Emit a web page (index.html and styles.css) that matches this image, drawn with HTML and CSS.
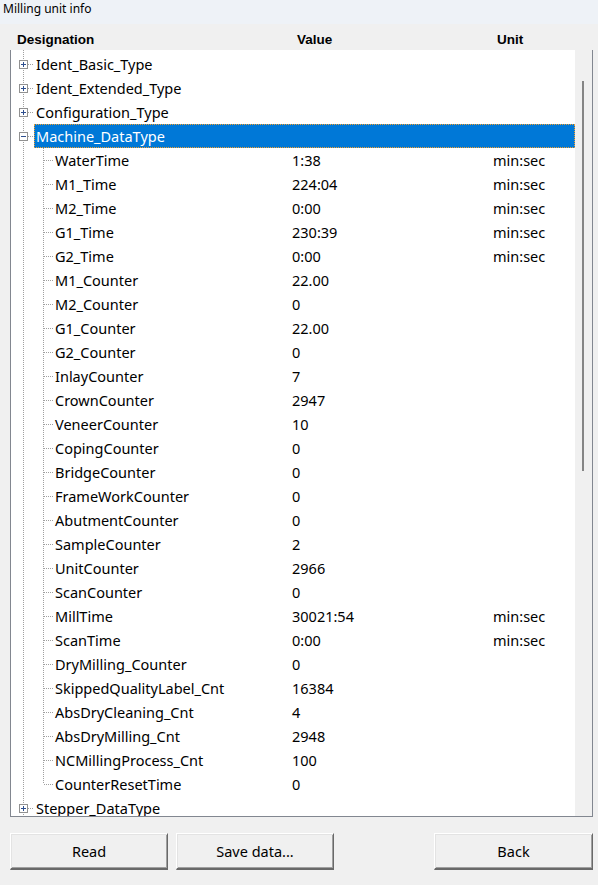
FILE: index.html
```html
<!DOCTYPE html>
<html>
<head>
<meta charset="utf-8">
<link rel="stylesheet" href="styles.css">
</head>
<body>
<div class="title">Milling unit info</div>
<div class="header">
  <span class="h-des">Designation</span>
  <span class="h-val">Value</span>
  <span class="h-unit">Unit</span>
</div>
<div class="panel">
  <div class="tree">
    <div class="row root"><span class="tog"><svg width="9" height="9" viewBox="0 0 9 9"><rect x="0.5" y="0.5" width="8" height="8" fill="#fff" stroke="#919191"/><path d="M2 4.5h5M4.5 2v5" stroke="#2e4f8f"/></svg></span><span class="hconn"></span><span class="label">Ident_Basic_Type</span></div>
    <div class="row root"><span class="tog"><svg width="9" height="9" viewBox="0 0 9 9"><rect x="0.5" y="0.5" width="8" height="8" fill="#fff" stroke="#919191"/><path d="M2 4.5h5M4.5 2v5" stroke="#2e4f8f"/></svg></span><span class="hconn"></span><span class="label">Ident_Extended_Type</span></div>
    <div class="row root"><span class="tog"><svg width="9" height="9" viewBox="0 0 9 9"><rect x="0.5" y="0.5" width="8" height="8" fill="#fff" stroke="#919191"/><path d="M2 4.5h5M4.5 2v5" stroke="#2e4f8f"/></svg></span><span class="hconn"></span><span class="label">Configuration_Type</span></div>
    <div class="row root"><span class="tog"><svg width="9" height="9" viewBox="0 0 9 9"><rect x="0.5" y="0.5" width="8" height="8" fill="#fff" stroke="#919191"/><path d="M2 4.5h5" stroke="#2e4f8f"/></svg></span><span class="hconn"></span><span class="label selected">Machine_DataType</span></div>
    <div class="children">
      <div class="row child"><span class="cconn"></span><span class="name">WaterTime</span><span class="val">1:38</span><span class="unit">min:sec</span></div>
      <div class="row child"><span class="cconn"></span><span class="name">M1_Time</span><span class="val">224:04</span><span class="unit">min:sec</span></div>
      <div class="row child"><span class="cconn"></span><span class="name">M2_Time</span><span class="val">0:00</span><span class="unit">min:sec</span></div>
      <div class="row child"><span class="cconn"></span><span class="name">G1_Time</span><span class="val">230:39</span><span class="unit">min:sec</span></div>
      <div class="row child"><span class="cconn"></span><span class="name">G2_Time</span><span class="val">0:00</span><span class="unit">min:sec</span></div>
      <div class="row child"><span class="cconn"></span><span class="name">M1_Counter</span><span class="val">22.00</span><span class="unit"></span></div>
      <div class="row child"><span class="cconn"></span><span class="name">M2_Counter</span><span class="val">0</span><span class="unit"></span></div>
      <div class="row child"><span class="cconn"></span><span class="name">G1_Counter</span><span class="val">22.00</span><span class="unit"></span></div>
      <div class="row child"><span class="cconn"></span><span class="name">G2_Counter</span><span class="val">0</span><span class="unit"></span></div>
      <div class="row child"><span class="cconn"></span><span class="name">InlayCounter</span><span class="val">7</span><span class="unit"></span></div>
      <div class="row child"><span class="cconn"></span><span class="name">CrownCounter</span><span class="val">2947</span><span class="unit"></span></div>
      <div class="row child"><span class="cconn"></span><span class="name">VeneerCounter</span><span class="val">10</span><span class="unit"></span></div>
      <div class="row child"><span class="cconn"></span><span class="name">CopingCounter</span><span class="val">0</span><span class="unit"></span></div>
      <div class="row child"><span class="cconn"></span><span class="name">BridgeCounter</span><span class="val">0</span><span class="unit"></span></div>
      <div class="row child"><span class="cconn"></span><span class="name">FrameWorkCounter</span><span class="val">0</span><span class="unit"></span></div>
      <div class="row child"><span class="cconn"></span><span class="name">AbutmentCounter</span><span class="val">0</span><span class="unit"></span></div>
      <div class="row child"><span class="cconn"></span><span class="name">SampleCounter</span><span class="val">2</span><span class="unit"></span></div>
      <div class="row child"><span class="cconn"></span><span class="name">UnitCounter</span><span class="val">2966</span><span class="unit"></span></div>
      <div class="row child"><span class="cconn"></span><span class="name">ScanCounter</span><span class="val">0</span><span class="unit"></span></div>
      <div class="row child"><span class="cconn"></span><span class="name">MillTime</span><span class="val">30021:54</span><span class="unit">min:sec</span></div>
      <div class="row child"><span class="cconn"></span><span class="name">ScanTime</span><span class="val">0:00</span><span class="unit">min:sec</span></div>
      <div class="row child"><span class="cconn"></span><span class="name">DryMilling_Counter</span><span class="val">0</span><span class="unit"></span></div>
      <div class="row child"><span class="cconn"></span><span class="name">SkippedQualityLabel_Cnt</span><span class="val">16384</span><span class="unit"></span></div>
      <div class="row child"><span class="cconn"></span><span class="name">AbsDryCleaning_Cnt</span><span class="val">4</span><span class="unit"></span></div>
      <div class="row child"><span class="cconn"></span><span class="name">AbsDryMilling_Cnt</span><span class="val">2948</span><span class="unit"></span></div>
      <div class="row child"><span class="cconn"></span><span class="name">NCMillingProcess_Cnt</span><span class="val">100</span><span class="unit"></span></div>
      <div class="row child"><span class="cconn"></span><span class="name">CounterResetTime</span><span class="val">0</span><span class="unit"></span></div>
    </div>
    <div class="row root"><span class="tog"><svg width="9" height="9" viewBox="0 0 9 9"><rect x="0.5" y="0.5" width="8" height="8" fill="#fff" stroke="#919191"/><path d="M2 4.5h5M4.5 2v5" stroke="#2e4f8f"/></svg></span><span class="hconn"></span><span class="label">Stepper_DataType</span></div>
  </div>
  <div class="scrollbar"><div class="thumb"></div></div>
</div>
<div class="buttons">
  <button class="btn">Read</button>
  <button class="btn">Save data...</button>
  <span class="spacer"></span>
  <button class="btn btn-back">Back</button>
</div>
</body>
</html>
```
FILE: styles.css
```css
html, body {
  margin: 0;
  padding: 0;
}
body {
  width: 598px;
  height: 885px;
  background: #f0f0f0;
  font-family: "Noto Sans", "Open Sans", sans-serif;
  color: #000;
  overflow: hidden;
}
.title {
  height: 24px;
  background: #eef2f7;
  font-size: 12px;
  line-height: 18px;
  padding-left: 3px;
  box-sizing: border-box;
}
.header {
  height: 26px;
  display: flex;
  align-items: center;
  padding-top: 4px;
  box-sizing: border-box;
  font-family: "Liberation Sans", Arial, sans-serif;
  font-weight: bold;
  font-size: 13.5px;
  width: 589px;
}
.h-des { margin-left: 17px; width: 280px; }
.h-val { width: 200px; }
.h-unit { }
.panel {
  margin-left: 10px;
  width: 583px;
  height: 767px;
  box-sizing: border-box;
  border-left: 1px solid #828790;
  border-right: 1px solid #828790;
  border-bottom: 1px solid #828790;
  display: flex;
  background: #fff;
}
.tree {
  width: 564px;
  height: 100%;
  overflow: hidden;
  padding-top: 2px;
  box-sizing: border-box;
  font-size: 14.5px;
  background-image: repeating-linear-gradient(to bottom, #a0a0a0 0 1px, transparent 1px 2px);
  background-size: 1px 100%;
  background-position: 12px 0;
  background-repeat: no-repeat;
}
.row {
  height: 24px;
  display: flex;
  align-items: center;
  white-space: nowrap;
}
.tog {
  width: 9px;
  height: 9px;
  margin-left: 8px;
  display: flex;
}
.tog svg { display: block; }
.hconn {
  width: 6px;
  height: 1px;
  background-image: repeating-linear-gradient(to right, #a0a0a0 0 1px, transparent 1px 2px);
}
.label {
  height: 24px;
  line-height: 22px;
  padding-left: 1px;
  box-sizing: border-box;
  border: 1px solid transparent;
}
.label.selected {
  flex: 1;
  background: #0078d7;
  color: #fff;
  border: 1px dotted #f0a030;
}
.children {
  background-image: repeating-linear-gradient(to bottom, #a0a0a0 0 1px, transparent 1px 2px);
  background-size: 1px calc(100% - 12px);
  background-position: 32px 0;
  background-repeat: no-repeat;
}
.cconn {
  width: 9px;
  height: 1px;
  margin-left: 33px;
  background-image: repeating-linear-gradient(to right, #a0a0a0 0 1px, transparent 1px 2px);
}
.name {
  width: 237px;
  padding-left: 2px;
}
.val {
  width: 201px;
}
.scrollbar {
  width: 17px;
  height: 100%;
  background: #f0f0f0;
  padding-top: 31px;
  box-sizing: border-box;
}
.thumb {
  width: 2px;
  height: 390px;
  margin-left: 7px;
  background: #858585;
}
.buttons {
  display: flex;
  margin-top: 16px;
  padding-left: 10px;
  width: 593px;
  box-sizing: border-box;
}
.btn {
  width: 158px;
  height: 37px;
  background: #f0f0f0;
  border: none;
  border-top: 1px solid #ffffff;
  border-left: 1px solid #ffffff;
  border-right: 1px solid #696969;
  border-bottom: 2px solid #696969;
  box-shadow: inset 1px 1px 0 #e3e3e3, inset -1px -1px 0 #a0a0a0;
  font-family: "Noto Sans", "Open Sans", sans-serif;
  font-size: 14.5px;
  color: #000;
  padding: 0;
}
.btn + .btn { margin-left: 8px; }
.spacer { flex: 1; }
.btn-back { width: 159px; }
```
